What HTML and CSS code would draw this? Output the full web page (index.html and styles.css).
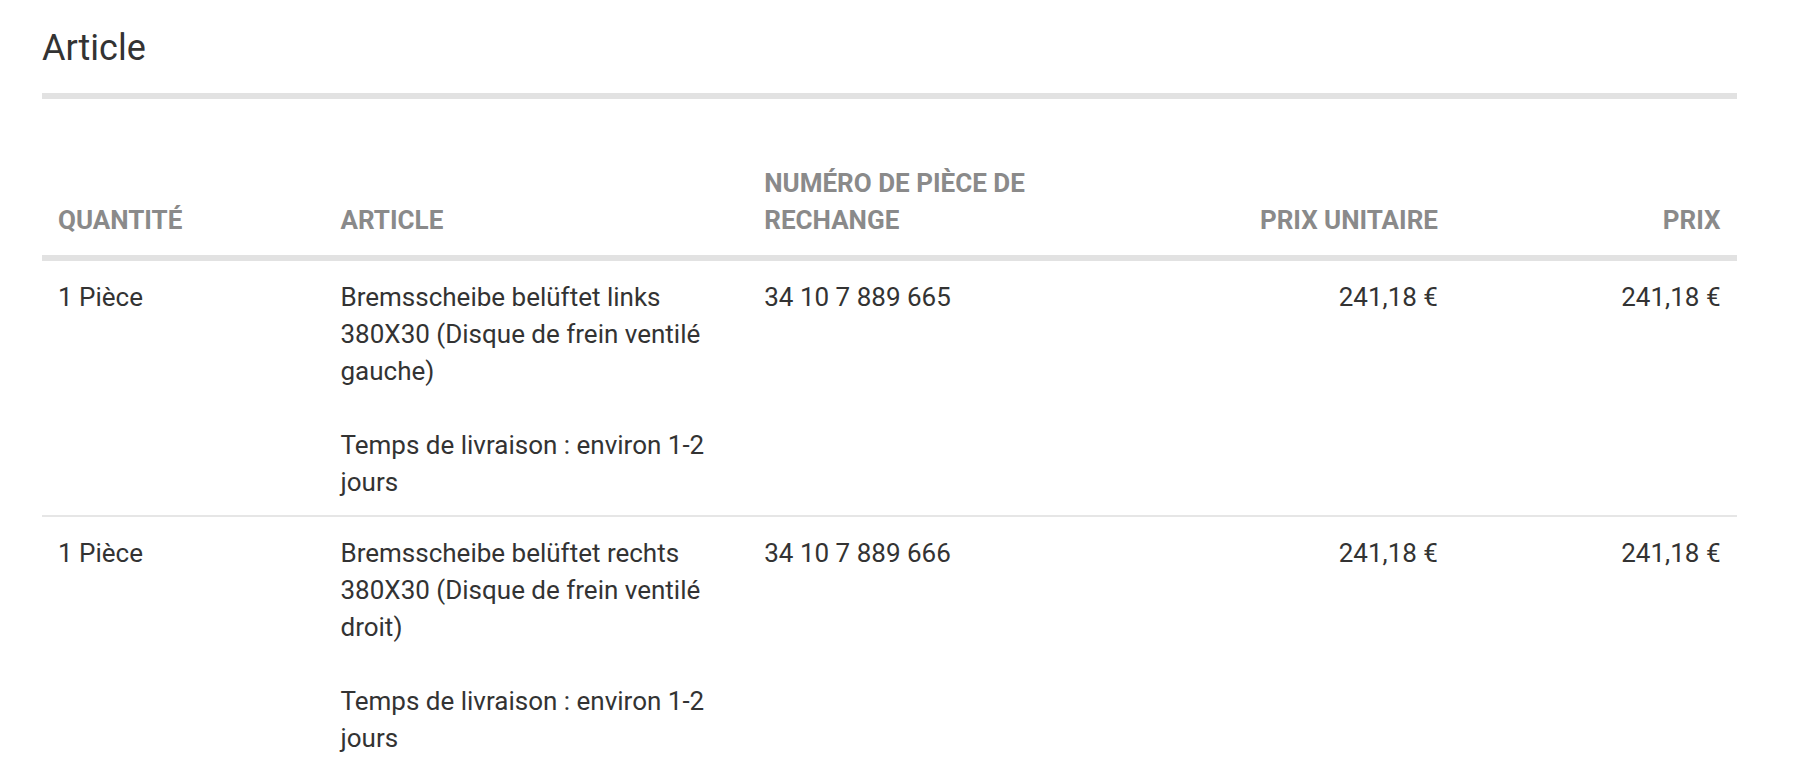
FILE: index.html
```html
<!DOCTYPE html>
<html lang="fr">
<head>
<meta charset="utf-8">
<title>Article</title>
<link rel="stylesheet" href="styles.css">
</head>
<body>
<section class="articles">
  <h2 class="articles-title">Article</h2>
  <table class="articles-table">
    <colgroup>
      <col class="col-qty">
      <col class="col-article">
      <col class="col-number">
      <col class="col-unit">
      <col class="col-price">
    </colgroup>
    <thead>
      <tr>
        <th>Quantité</th>
        <th>Article</th>
        <th>Numéro de pièce de rechange</th>
        <th class="num">Prix unitaire</th>
        <th class="num">Prix</th>
      </tr>
    </thead>
    <tbody>
      <tr>
        <td>1 Pièce</td>
        <td>
          <p class="desc">Bremsscheibe belüftet links 380X30 (Disque de frein ventilé gauche)</p>
          <p class="delivery">Temps de livraison : environ 1-2 jours</p>
        </td>
        <td>34 10 7 889 665</td>
        <td class="num">241,18 €</td>
        <td class="num">241,18 €</td>
      </tr>
      <tr>
        <td>1 Pièce</td>
        <td>
          <p class="desc">Bremsscheibe belüftet rechts 380X30 (Disque de frein ventilé droit)</p>
          <p class="delivery">Temps de livraison : environ 1-2 jours</p>
        </td>
        <td>34 10 7 889 666</td>
        <td class="num">241,18 €</td>
        <td class="num">241,18 €</td>
      </tr>
    </tbody>
  </table>
</section>
</body>
</html>
```

FILE: styles.css
```css
html, body {
  margin: 0;
  background: #ffffff;
}

body {
  font-family: Roboto, "Liberation Sans", Arial, sans-serif;
  color: #333333;
  padding: 27px 83px 0 42px;
}

.articles {
  width: 1695px;
}

.articles-title {
  margin: 0;
  font-size: 36px;
  font-weight: 400;
  line-height: 43px;
  color: #333333;
  padding-bottom: 23px;
  border-bottom: 6px solid #e2e2e2;
}

.articles-table {
  width: 100%;
  margin-top: 52px;
  border-collapse: collapse;
  table-layout: fixed;
  font-size: 26px;
  line-height: 37px;
}

.col-qty { width: 282.5px; }
.col-article { width: 423.75px; }
.col-number { width: 353.1px; }
.col-unit { width: 353.1px; }
.col-price { width: 282.5px; }

.articles-table th {
  text-align: left;
  vertical-align: bottom;
  font-weight: 700;
  text-transform: uppercase;
  color: #8a8a8a;
  padding: 14px 16.5px 15.5px 16px;
  border-bottom: 6px solid #e2e2e2;
}

.articles-table td {
  text-align: left;
  vertical-align: top;
  padding: 18px 16.5px 14.5px 16px;
  border-bottom: 2px solid #e6e6e6;
}

.articles-table .num {
  text-align: right;
}

.desc,
.delivery {
  margin: 0;
}

.delivery {
  margin-top: 37px;
}
```
